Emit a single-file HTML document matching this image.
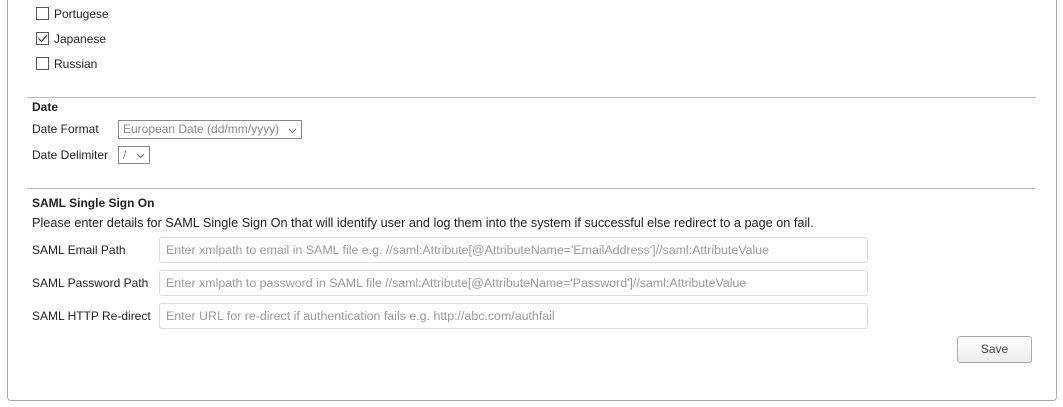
<!DOCTYPE html>
<html><head><style>
body{margin:0;width:1063px;height:407px;background:#fff;font-family:"Liberation Sans",Arial,sans-serif;font-size:12px;color:#222;position:relative;overflow:hidden}
.a{position:absolute;white-space:nowrap}
.panel{position:absolute;left:7px;top:-10px;width:1048px;height:409px;border:1px solid #aaa;border-radius:4px}
.hr{position:absolute;left:27px;width:1009px;height:1px;background:#bbb}
.cb{position:absolute;left:36px;width:11px;height:11px;border:1px solid #555;background:#fff}
.inp{position:absolute;left:159px;width:701px;height:24px;border:1px solid #ddd;border-radius:3px;color:#999;padding-left:6px;line-height:24px;box-sizing:content-box;font-size:12.4px;overflow:hidden}
.sel{position:absolute;left:118px;border:1px solid #888;height:17px;line-height:17px;color:#888;padding-left:4px;box-sizing:border-box;font-size:12px}
.chev{position:absolute;right:4px;top:3px}
</style></head><body>
<div class="panel"></div>
<div class="cb" style="top:7px"></div><div class="a" style="left:54px;top:7px">Portugese</div>
<div class="cb" style="top:32px"><svg width="11" height="11" style="position:absolute;left:0;top:0"><path d="M1.5 5.5 L4.5 8.5 L10 2" stroke="#333" stroke-width="1.2" fill="none"/></svg></div><div class="a" style="left:54px;top:32px">Japanese</div>
<div class="cb" style="top:57px"></div><div class="a" style="left:54px;top:57px">Russian</div>
<div class="hr" style="top:97px"></div>
<div class="a" style="left:32px;top:100px;font-weight:bold">Date</div>
<div class="a" style="left:32px;top:122px">Date Format</div>
<div class="sel" style="top:120px;width:184px;height:19px;line-height:17px">European Date (dd/mm/yyyy)<svg class="chev" width="9" height="10" style="top:5px"><path d="M1 3 L4.5 6.5 L8 3" stroke="#666" fill="none"/></svg></div>
<div class="a" style="left:32px;top:148px">Date Delimiter</div>
<div class="sel" style="top:146px;width:32px;height:18px">/<svg class="chev" width="9" height="10" style="top:4px"><path d="M1 3 L4.5 6.5 L8 3" stroke="#666" fill="none"/></svg></div>
<div class="hr" style="top:188px"></div>
<div class="a" style="left:32px;top:196px;font-weight:bold">SAML Single Sign On</div>
<div class="a" style="left:32px;top:216px;font-size:12.7px">Please enter details for SAML Single Sign On that will identify user and log them into the system if successful else redirect to a page on fail.</div>
<div class="a" style="left:32px;top:243px">SAML Email Path</div>
<div class="inp" style="top:237px">Enter xmlpath to email in SAML file e.g. //saml:Attribute[@AttributeName='EmailAddress']//saml:AttributeValue</div>
<div class="a" style="left:32px;top:276px">SAML Password Path</div>
<div class="inp" style="top:270px">Enter xmlpath to password in SAML file //saml:Attribute[@AttributeName='Password']//saml:AttributeValue</div>
<div class="a" style="left:32px;top:309px">SAML HTTP Re-direct</div>
<div class="inp" style="top:303px">Enter URL for re-direct if authentication fails e.g. http://abc.com/authfail</div>
<div class="a" style="left:957px;top:336px;width:73px;height:25px;border:1px solid #aaa;border-radius:3px;background:linear-gradient(#fff,#ececec);text-align:center;line-height:25px;color:#444">Save</div>
</body></html>
